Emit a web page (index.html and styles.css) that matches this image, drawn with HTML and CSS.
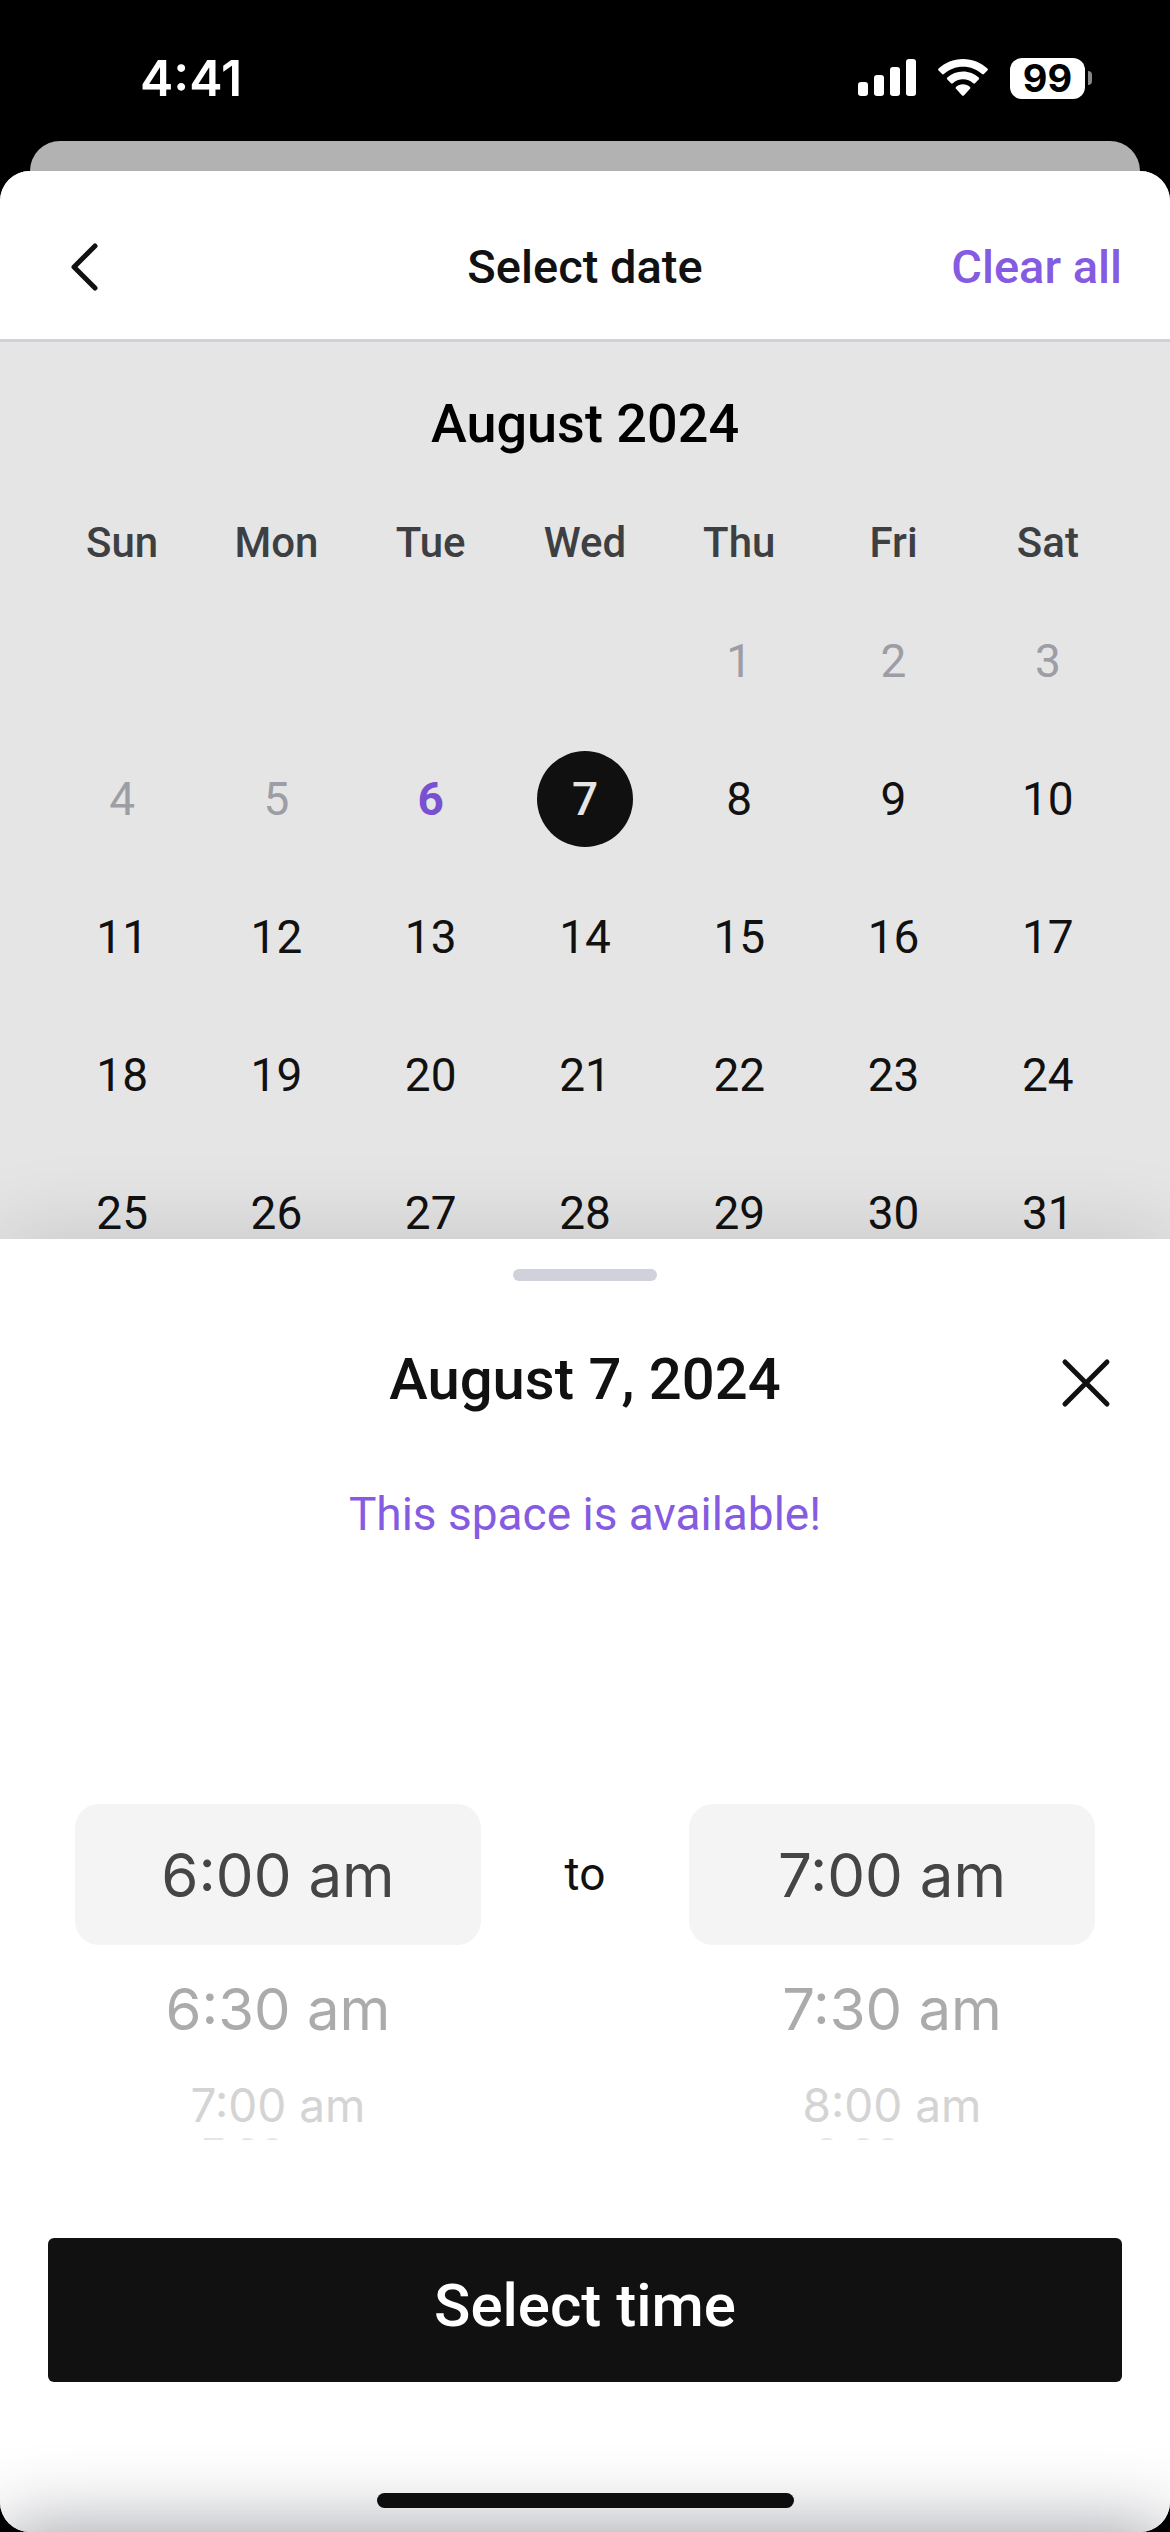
FILE: index.html
```html
<!DOCTYPE html>
<html lang="en">
<head>
    <meta charset="UTF-8">
    <meta name="viewport" content="width=device-width, initial-scale=1.0">
    <title>Select date</title>
    <link rel="stylesheet" href="styles.css">
</head>
<body>
    <div class="status-bar">
        <span class="clock">4:41</span>
        <div class="status-icons">
            <svg class="signal" width="58" height="38" viewBox="0 0 58 38" fill="#fff">
                <rect x="0" y="23" width="10" height="14" rx="3"/>
                <rect x="16" y="16" width="10" height="21" rx="3"/>
                <rect x="32" y="8" width="10" height="29" rx="3"/>
                <rect x="48" y="0" width="10" height="37" rx="3"/>
            </svg>
            <svg class="wifi" width="50" height="38" viewBox="0 0 50 38" fill="#fff">
                <path d="M25 0C15.500 0 7 3.600.600 9.600a1.300 1.300 0 0 0 0 1.900l3.500 3.500a1.300 1.300 0 0 0 1.800 0C11 10.400 17.600 7.700 25 7.700s14 2.700 19.100 7.300a1.300 1.300 0 0 0 1.800 0l3.500-3.500a1.300 1.300 0 0 0 0-1.900C43 3.600 34.500 0 25 0z"/>
                <path d="M25 12.600c-6 0-11.500 2.300-15.700 6a1.300 1.300 0 0 0 0 1.900l3.700 3.700a1.300 1.300 0 0 0 1.800 0c2.700-2.400 6.300-3.900 10.200-3.900s7.500 1.500 10.200 3.900a1.300 1.300 0 0 0 1.800 0l3.700-3.700a1.300 1.300 0 0 0 0-1.900c-4.200-3.700-9.700-6-15.700-6z"/>
                <path d="M25 25.300c-2.700 0-5.100 1-7 2.600a1.200 1.200 0 0 0 0 1.800l6.100 6.700a1.300 1.300 0 0 0 1.800 0l6.100-6.700a1.200 1.200 0 0 0 0-1.800c-1.900-1.600-4.300-2.600-7-2.600z"/>
            </svg>
            <div class="battery">
                <span class="battery-level">99</span>
                <span class="battery-cap"></span>
            </div>
        </div>
    </div>

    <div class="back-card"></div>

    <main class="screen">
        <header class="top-bar">
            <button class="icon-btn" aria-label="Back">
                <svg width="28" height="48" viewBox="0 0 28 48" fill="none" stroke="#111" stroke-width="5" stroke-linecap="round" stroke-linejoin="round">
                    <path d="M25 3L4 24l21 21"/>
                </svg>
            </button>
            <h1 class="top-title">Select date</h1>
            <button class="clear-btn">Clear all</button>
        </header>

        <section class="calendar">
            <h2 class="month">August 2024</h2>
            <table class="days">
                <thead>
                    <tr><th>Sun</th><th>Mon</th><th>Tue</th><th>Wed</th><th>Thu</th><th>Fri</th><th>Sat</th></tr>
                </thead>
                <tbody>
                    <tr>
                        <td></td><td></td><td></td><td></td>
                        <td><button class="day" disabled>1</button></td>
                        <td><button class="day" disabled>2</button></td>
                        <td><button class="day" disabled>3</button></td>
                    </tr>
                    <tr>
                        <td><button class="day" disabled>4</button></td>
                        <td><button class="day" disabled>5</button></td>
                        <td><button class="day today">6</button></td>
                        <td><button class="day selected">7</button></td>
                        <td><button class="day">8</button></td>
                        <td><button class="day">9</button></td>
                        <td><button class="day">10</button></td>
                    </tr>
                    <tr>
                        <td><button class="day">11</button></td>
                        <td><button class="day">12</button></td>
                        <td><button class="day">13</button></td>
                        <td><button class="day">14</button></td>
                        <td><button class="day">15</button></td>
                        <td><button class="day">16</button></td>
                        <td><button class="day">17</button></td>
                    </tr>
                    <tr>
                        <td><button class="day">18</button></td>
                        <td><button class="day">19</button></td>
                        <td><button class="day">20</button></td>
                        <td><button class="day">21</button></td>
                        <td><button class="day">22</button></td>
                        <td><button class="day">23</button></td>
                        <td><button class="day">24</button></td>
                    </tr>
                    <tr>
                        <td><button class="day">25</button></td>
                        <td><button class="day">26</button></td>
                        <td><button class="day">27</button></td>
                        <td><button class="day">28</button></td>
                        <td><button class="day">29</button></td>
                        <td><button class="day">30</button></td>
                        <td><button class="day">31</button></td>
                    </tr>
                </tbody>
            </table>
        </section>

        <!-- Time sheet, slides over the calendar -->
        <section class="sheet">
            <div class="handle"></div>
            <div class="sheet-header">
                <h2 class="sheet-title">August 7, 2024</h2>
                <button class="icon-btn" aria-label="Close">
                    <svg width="50" height="50" viewBox="0 0 50 50" fill="none" stroke="#111" stroke-width="5" stroke-linecap="round">
                        <path d="M4 4l42 42M46 4L4 46"/>
                    </svg>
                </button>
            </div>
            <p class="message">This space is available!</p>

            <div class="pickers">
                <div class="wheel" role="listbox" aria-label="Start time">
                    <button class="time current" role="option" aria-selected="true">6:00 am</button>
                    <button class="time near" role="option">6:30 am</button>
                    <button class="time far" role="option">7:00 am</button>
                    <button class="time edge" role="option">7:30 am</button>
                </div>
                <span class="to">to</span>
                <div class="wheel" role="listbox" aria-label="End time">
                    <button class="time current" role="option" aria-selected="true">7:00 am</button>
                    <button class="time near" role="option">7:30 am</button>
                    <button class="time far" role="option">8:00 am</button>
                    <button class="time edge" role="option">8:30 am</button>
                </div>
            </div>

            <button class="submit-btn">Select time</button>
            <div class="home-indicator"></div>
        </section>
    </main>
</body>
</html>
```

FILE: styles.css
```css
* {
    box-sizing: border-box;
}
body {
    display: flex;
    flex-direction: column;
    min-height: 100vh;
    margin: 0;
    background-color: #000;
    color: #111;
    font-family: Roboto, "Liberation Sans", sans-serif;
}
h1, h2, p {
    margin: 0;
    text-align: center;
}
button {
    padding: 0;
    border: none;
    background: none;
    color: inherit;
    font-family: inherit;
    cursor: pointer;
}

/* Status bar */
.status-bar {
    display: flex;
    justify-content: space-between;
    align-items: center;
    height: 141px;
    padding: 15px 78px 0 140px;
    color: #fff;
    font-family: Inter, sans-serif;
}
.clock {
    font-size: 50px;
    font-weight: 600;
}
.status-icons {
    display: flex;
    align-items: center;
    gap: 22px;
}
.battery {
    display: flex;
    align-items: center;
    gap: 3px;
}
.battery-level {
    width: 75px;
    height: 41px;
    border-radius: 12px;
    background-color: #fff;
    color: #000;
    font-size: 38px;
    font-weight: 700;
    line-height: 41px;
    text-align: center;
}
.battery-cap {
    width: 4px;
    height: 14px;
    border-radius: 0 4px 4px 0;
    background-color: #888;
}

.back-card {
    height: 30px;
    margin: 0 30px;
    border-radius: 30px 30px 0 0;
    background-color: #b2b2b2;
}
.screen {
    display: flex;
    flex-direction: column;
    flex: 1;
    border-radius: 30px;
    overflow: hidden;
    background-color: #e5e5e5;
}

/* Header */
.top-bar {
    display: grid;
    grid-template-columns: 1fr auto 1fr;
    align-items: center;
    height: 171px;
    padding: 24px 48px 0;
    border-bottom: 3px solid #d1d1db;
    background-color: #fff;
}
.icon-btn {
    display: flex;
    justify-content: center;
    align-items: center;
    width: 72px;
    height: 72px;
}
.top-title,
.clear-btn {
    padding-bottom: 2px;
    font-size: 47px;
    font-weight: 500;
}
.clear-btn {
    justify-self: end;
    color: #855be2;
}

/* Calendar */
.calendar {
    padding: 50px 45px 0;
}
.month {
    margin-bottom: 37px;
    color: #000;
    font-size: 54px;
    font-weight: 500;
    line-height: 64px;
}
.days {
    width: 100%;
    table-layout: fixed;
    border-collapse: collapse;
}
.days th {
    height: 99px;
    padding: 0;
    color: #3d3f42;
    font-size: 42px;
    font-weight: 500;
}
.days td {
    height: 138px;
    padding: 0;
    text-align: center;
}
.day {
    width: 96px;
    height: 96px;
    border-radius: 50%;
    font-size: 46px;
}
.day:disabled {
    color: #9d9da6;
}
.day.today {
    color: #7850d0;
    font-weight: 700;
}
.day.selected {
    background-color: #101010;
    color: #e5e5e5;
    font-weight: 500;
}

/* Time sheet */
.sheet {
    position: relative;
    display: flex;
    flex-direction: column;
    flex: 1;
    margin-top: -43px;
    padding: 30px 48px 24px;
    background-color: #fff;
    box-shadow: 0 0 80px rgba(20, 20, 30, 0.16);
}
/* shade rising from the bottom edge */
.sheet::after {
    content: "";
    position: absolute;
    top: 100%;
    left: 0;
    right: 0;
    height: 100px;
    box-shadow: 0 0 80px rgba(20, 24, 40, 0.45);
}
.handle {
    align-self: center;
    width: 144px;
    height: 12px;
    border-radius: 6px;
    background-color: #d1d1db;
}
.sheet-header {
    display: grid;
    grid-template-columns: 1fr 72px;
    height: 72px;
    margin-top: 66px;
    padding-left: 72px;
}
.sheet-title {
    font-size: 58px;
    font-weight: 500;
    line-height: 64px;
}
.message {
    margin-top: 65px;
    color: #855be2;
    font-size: 46px;
    line-height: 60px;
}
.pickers {
    display: grid;
    grid-template-columns: 1fr 208px 1fr;
    margin-top: 260px;
    padding: 0 27px;
}
.wheel {
    display: flex;
    flex-direction: column;
}
.time {
    font-family: Inter, sans-serif;
}
.time.current {
    height: 141px;
    border-radius: 24px;
    background-color: #f4f4f4;
    color: #454545;
    font-size: 60px;
}
.time.near {
    height: 128px;
    color: #ababab;
    font-size: 58px;
}
.time.far {
    height: 64px;
    color: #d4d4d4;
    font-size: 46px;
}
/* last row is almost rolled out of view */
.time.edge {
    height: 3px;
    overflow: hidden;
    color: #e5e5e5;
    font-size: 40px;
    line-height: 32px;
}
.to {
    height: 141px;
    font-size: 46px;
    line-height: 141px;
    text-align: center;
}
.submit-btn {
    height: 144px;
    margin-top: 98px;
    padding-bottom: 10px;
    border-radius: 6px;
    background-color: #111;
    color: #fff;
    font-size: 60px;
    font-weight: 500;
}
.home-indicator {
    align-self: center;
    width: 417px;
    height: 15px;
    margin-top: auto;
    border-radius: 8px;
    background-color: #0d0d0d;
    z-index: 1;
}
```
